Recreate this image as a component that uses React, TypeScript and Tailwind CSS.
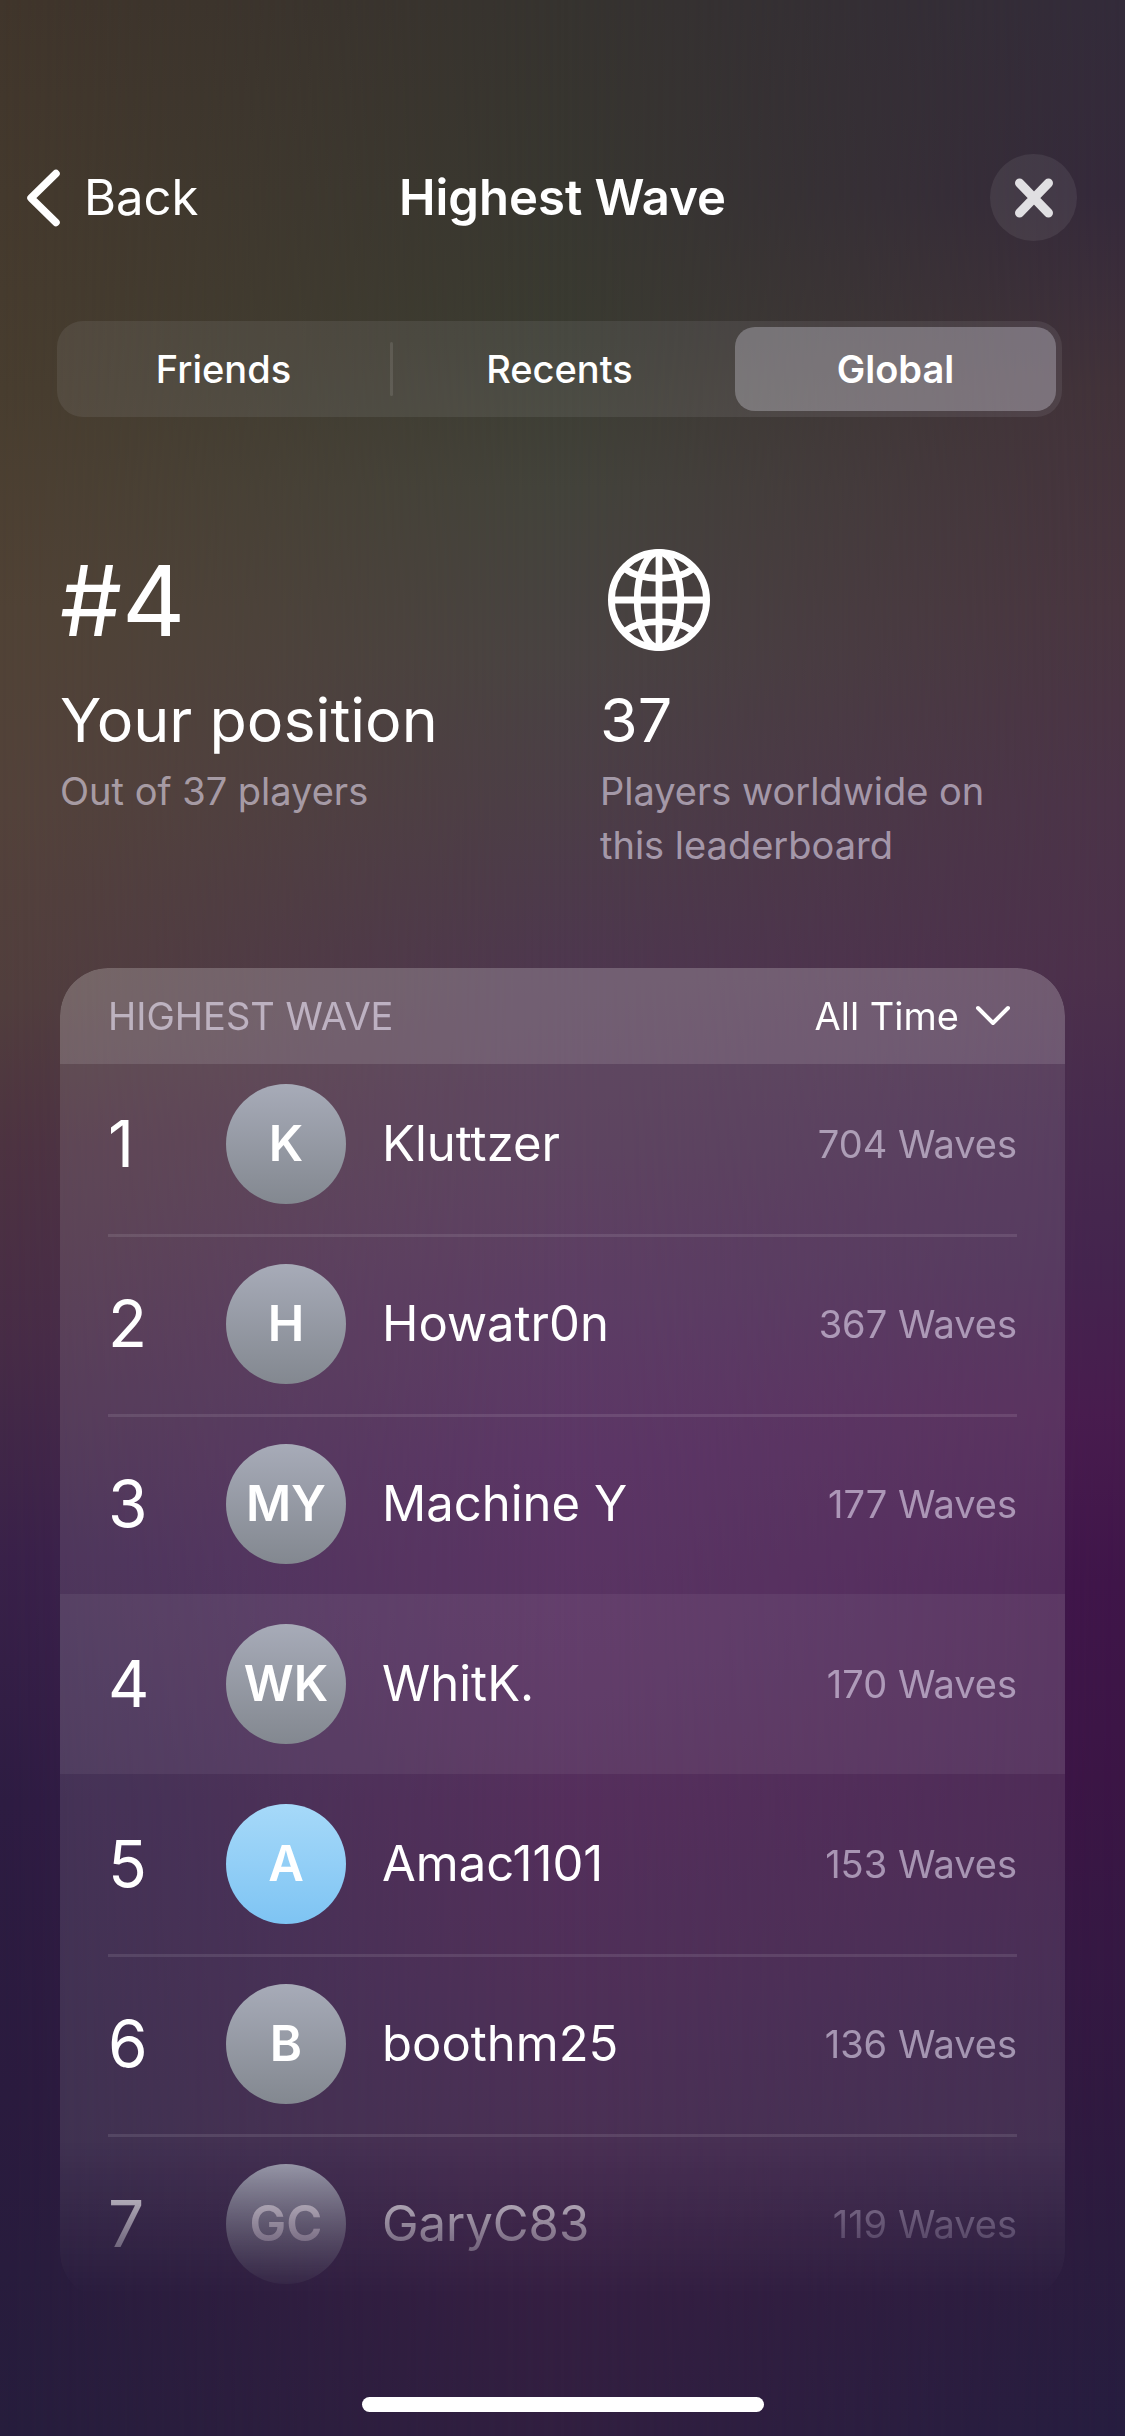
import { Fragment, useState } from 'react'
import clsx from 'clsx'

type Player = {
  rank: number
  initials: string
  name: string
  waves: number
  blue?: boolean
}

const tabs = ['Friends', 'Recents', 'Global']

const players: Player[] = [
  { rank: 1, initials: 'K', name: 'Kluttzer', waves: 704 },
  { rank: 2, initials: 'H', name: 'Howatr0n', waves: 367 },
  { rank: 3, initials: 'MY', name: 'Machine Y', waves: 177 },
  { rank: 4, initials: 'WK', name: 'WhitK.', waves: 170 },
  { rank: 5, initials: 'A', name: 'Amac1101', waves: 153, blue: true },
  { rank: 6, initials: 'B', name: 'boothm25', waves: 136 },
  { rank: 7, initials: 'GC', name: 'GaryC83', waves: 119 }
]

const myRank = 4

function Backdrop(){
  return (
    <div className="absolute inset-0 -z-10 bg-[linear-gradient(to_bottom,#36332f_0%,#383730_8%,#3a3b31_14%,#43433b_20%,#494342_27%,#4c3e47_33%,#4e374f_40%,#4c304f_47%,#4b2754_54%,#4a2055_60%,#471c51_68%,#42184a_74%,#3b1946_82%,#361941_88%,#351f42_94%,#311f40_100%)]">
      <div className="absolute inset-0 bg-[linear-gradient(to_bottom,#40352b_0%,#483d2f_16%,#504235_25%,#53423a_33%,#513e3d_41%,#4d3341_47%,#472c46_55%,#392149_64%,#2d1c42_74%,#2a1b3e_86%,#261d3c_100%)] [mask-image:linear-gradient(to_right,black,transparent_50%)]" />
      <div className="absolute inset-0 bg-[linear-gradient(to_bottom,#332b3a_0%,#35293b_8%,#42323a_16%,#493540_25%,#4b3348_33%,#4c304b_40%,#472a4e_46%,#44244e_52%,#481c4e_58%,#3f1549_65%,#3b1545_73%,#351843_80%,#301940_86%,#2b1c3e_92%,#261d3f_100%)] [mask-image:linear-gradient(to_left,black,transparent_50%)]" />
    </div>
  )
}

function GlobeIcon(){
  return (
    <svg viewBox="0 0 102 102" className="ml-2 size-[102px]" fill="none" stroke="currentColor" strokeWidth="6.8" aria-hidden="true">
      <circle cx="51" cy="51" r="47.6" />
      <ellipse cx="51" cy="51" rx="21.8" ry="47.6" />
      <path d="M51 3v96M3 51h96" />
      <path d="M16.500 19.500C25 26 37 29.300 51 29.300S77 26 85.500 19.500M16.500 82.500C25 76 37 72.700 51 72.700S77 76 85.500 82.500" />
    </svg>
  )
}

function PlayerRow({ player }: { player: Player }){
  const mine = player.rank === myRank
  // no divider above the first row or on either side of the highlighted one
  const divided = player.rank > 1 && !mine && player.rank !== myRank + 1
  const cell = clsx('flex h-[180px] items-center border-t-3 pb-[3px]', divided ? 'border-white/10' : 'border-transparent')

  return (
    <tr className={clsx('flex px-12', mine && 'bg-white/6')}>
      <td className={clsx(cell, 'w-[118px] text-[64px]')}>{player.rank}</td>
      <td className={clsx(cell, 'flex-1 gap-9 text-[49px]')}>
        <span
          className={clsx(
            'flex size-[120px] items-center justify-center rounded-full bg-linear-to-b font-semibold',
            player.blue ? 'from-[#a6d9f9] to-[#7ec4f3]' : 'from-[#a7abb8] to-[#838890]'
          )}
        >
          {player.initials}
        </span>
        {player.name}
      </td>
      <td className={clsx(cell, 'text-[38px] text-[#f3ebff]/55')}>{player.waves} Waves</td>
    </tr>
  )
}

export default function App(){
  const [tab, setTab] = useState('Global')
  const [range, setRange] = useState('All Time')

  return (
    <div className="relative isolate flex min-h-screen flex-col pt-[154px] pb-6 font-[Inter,'Liberation_Sans',sans-serif] text-white">
      <Backdrop />

      <header className="grid grid-cols-[1fr_auto_1fr] items-center px-6 text-[49px]">
        <button className="flex items-center gap-5 justify-self-start">
          <svg viewBox="0 0 40 60" className="h-[60px] w-10" fill="none" stroke="currentColor" strokeWidth="7.5" strokeLinecap="round" strokeLinejoin="round" aria-hidden="true">
            <path d="M32 5.500L7 30l25 24.500" />
          </svg>
          Back
        </button>
        <h1 className="font-semibold">Highest Wave</h1>
        <button aria-label="Close" className="mr-6 flex size-[87px] items-center justify-center justify-self-end rounded-full bg-white/7">
          <svg viewBox="0 0 40 40" className="size-10" fill="none" stroke="#e0dfe2" strokeWidth="9" strokeLinecap="round" aria-hidden="true">
            <path d="M5.500 5l29 30M34.500 5l-29 30" />
          </svg>
        </button>
      </header>

      <div role="tablist" className="mt-20 mr-[63px] ml-[57px] flex items-center rounded-[26px] bg-[#efefff]/8 p-1.5 text-[38px]">
        {tabs.map((name, i) => (
          <Fragment key={name}>
            {i > 0 && (
              <span className={clsx('mx-1.5 h-[54px] w-[3px] rounded-full', tab === name || tab === tabs[i - 1] ? 'bg-transparent' : 'bg-white/10')} />
            )}
            <button
              role="tab"
              aria-selected={tab === name}
              onClick={() => setTab(name)}
              className={clsx('h-[84px] flex-1 basis-0 rounded-[20px]', tab === name ? 'bg-[#efefff]/28 font-semibold' : 'font-medium')}
            >
              {name}
            </button>
          </Fragment>
        ))}
      </div>

      <section className="mx-[60px] mt-[131px] grid grid-cols-2 gap-[75px]">
        <div>
          <p className="flex h-[104px] items-center text-[98px]">#{myRank}</p>
          <h2 className="mt-7 text-[61px] leading-20">Your position</h2>
          <p className="mt-1 text-[38px] leading-[54px] text-[#f3ebff]/55">Out of 37 players</p>
        </div>
        <div>
          <div className="flex h-[104px] items-center">
            <GlobeIcon />
          </div>
          <h2 className="mt-7 text-[61px] leading-20">37</h2>
          <p className="mt-1 pr-10 text-[38px] leading-[54px] text-[#f3ebff]/55">Players worldwide on this leaderboard</p>
        </div>
      </section>

      <section className="mx-[60px] mt-24 overflow-hidden rounded-[48px] bg-white/10 [mask-image:linear-gradient(to_bottom,black_88%,transparent_100%)]">
        <div className="flex h-24 items-center justify-between bg-white/12 px-12 text-[38px]">
          <h3 className="text-[#f3ebff]/58">HIGHEST WAVE</h3>
          <div className="flex items-center gap-4 pr-1.5">
            <select
              aria-label="Time range"
              value={range}
              onChange={(e) => setRange(e.target.value)}
              className="appearance-none bg-transparent field-sizing-content"
            >
              <option>Today</option>
              <option>This Week</option>
              <option>All Time</option>
            </select>
            <svg viewBox="0 0 36 22" className="pointer-events-none h-[22px] w-9" fill="none" stroke="currentColor" strokeWidth="4" strokeLinecap="round" strokeLinejoin="round" aria-hidden="true">
              <path d="M3 3l15 15L33 3" />
            </svg>
          </div>
        </div>
        {/* list sits slightly scrolled under the header and runs past the card's bottom edge */}
        <table className="-mt-2.5 -mb-3.5 block w-full">
          <tbody className="block">
            {players.map((player) => (
              <PlayerRow key={player.rank} player={player} />
            ))}
          </tbody>
        </table>
      </section>

      <div className="mx-auto mt-auto h-[15px] w-[402px] rounded-full bg-white" />
    </div>
  )
}
